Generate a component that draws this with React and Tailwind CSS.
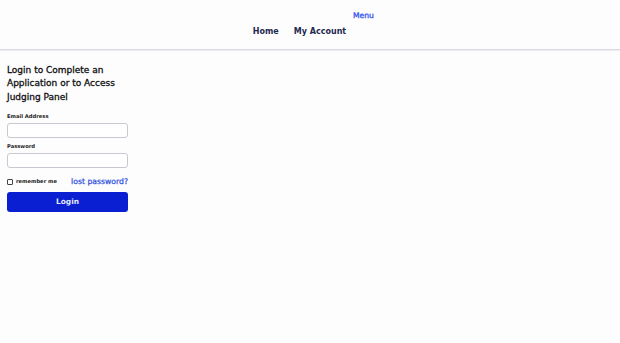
export default function App() {
  return (
    <div className="min-h-screen bg-[#fdfdfd] font-['DejaVu_Sans',sans-serif]">
      <header className="h-[50px] border-b border-[#d8d8e2] shadow-[0_1px_1px_rgba(0,0,0,0.06)] flex flex-col items-center">
        <div className="w-full flex justify-center pl-[107px] pt-[11px]">
          <span className="text-[7.6px] text-[#3a5bf0] leading-[10px] [-webkit-text-stroke:0.35px_#3a5bf0]">Menu</span>
        </div>
        <nav className="flex gap-[15px] pt-[6px] pr-[21px]">
          <a className="text-[8px] font-bold text-[#1e2a4f] leading-[10px]">Home</a>
          <a className="text-[8px] font-bold text-[#1e2a4f] leading-[10px]">My Account</a>
        </nav>
      </header>

      <div className="w-[121px] ml-[7px] pt-[13.5px]">
        <h1 className="text-[9px] font-medium text-[#111] leading-[13.5px] [-webkit-text-stroke:0.3px_#111]">
          Login to Complete an Application or to Access Judging Panel
        </h1>

        <form className="mt-[8px]">
          <label className="block text-[5.2px] font-bold text-[#222] leading-[8px]">Email Address</label>
          <input className="mt-[3px] block w-full h-[15px] rounded-[3px] border border-[#c8c8d0] bg-white" />

          <label className="block mt-[4px] text-[5.2px] font-bold text-[#222] leading-[8px]">Password</label>
          <input type="password" className="mt-[3px] block w-full h-[15px] rounded-[3px] border border-[#c8c8d0] bg-white" />

          <div className="mt-[9px] h-[10px] flex items-center justify-between">
            <label className="flex items-center gap-[3px]">
              <input type="checkbox" className="appearance-none w-[6px] h-[6px] m-0 border border-[#444] rounded-[1px] bg-white" />
              <span className="text-[5.2px] font-bold text-[#222]">remember me</span>
            </label>
            <a className="text-[7.7px] text-[#2f4fe0] [-webkit-text-stroke:0.25px_#2f4fe0]">lost password?</a>
          </div>

          <button type="button" className="mt-[5px] w-full h-[20px] rounded-[3px] bg-[#0a1fd2] text-[7.4px] font-bold text-[#e6eaff] leading-[20px]">
            Login
          </button>
        </form>
      </div>
    </div>
  )
}
